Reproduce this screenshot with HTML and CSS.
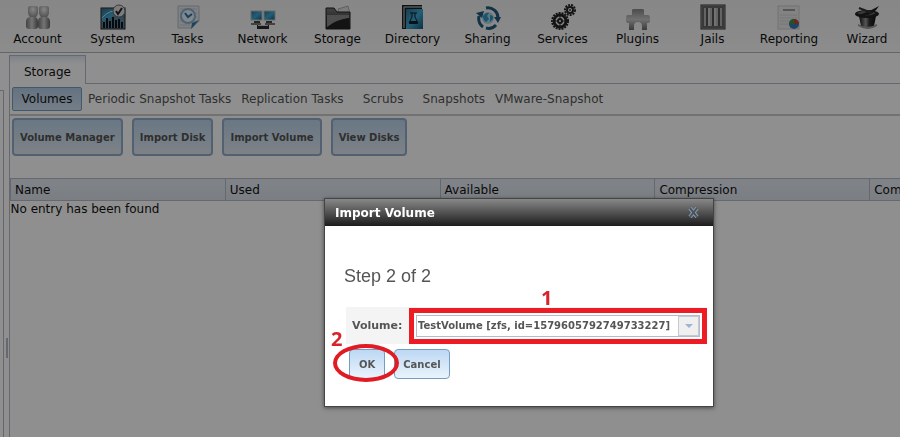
FILE: index.html
```html
<!DOCTYPE html>
<html lang="en">
<head>
    <meta charset="UTF-8">
    <meta name="viewport" content="width=device-width, initial-scale=1.0">
    <title>Storage - Import Volume</title>
    <link rel="stylesheet" href="styles.css">
</head>
<body>
    <svg width="0" height="0" class="defs" aria-hidden="true">
        <defs>
            <linearGradient id="silver" x1="0" y1="0" x2="0" y2="1">
                <stop offset="0" stop-color="#888"/>
                <stop offset="0.5" stop-color="#c8c8c8"/>
                <stop offset="1" stop-color="#6a6a6a"/>
            </linearGradient>
            <radialGradient id="head" cx="0.5" cy="0.3" r="0.7">
                <stop offset="0" stop-color="#f0f0f0"/>
                <stop offset="1" stop-color="#8a8a8a"/>
            </radialGradient>
            <linearGradient id="bust" x1="0" y1="0" x2="1" y2="0">
                <stop offset="0" stop-color="#777"/>
                <stop offset="0.5" stop-color="#d0d0d0"/>
                <stop offset="1" stop-color="#666"/>
            </linearGradient>
            <linearGradient id="dark" x1="0" y1="0" x2="0" y2="1">
                <stop offset="0" stop-color="#777"/>
                <stop offset="1" stop-color="#222"/>
            </linearGradient>
            <linearGradient id="blue" x1="0" y1="0" x2="1" y2="1">
                <stop offset="0" stop-color="#2a6f92"/>
                <stop offset="0.5" stop-color="#3fa9d4"/>
                <stop offset="1" stop-color="#145878"/>
            </linearGradient>
            <linearGradient id="hat" x1="0" y1="0" x2="1" y2="0">
                <stop offset="0" stop-color="#111"/>
                <stop offset="0.4" stop-color="#999"/>
                <stop offset="0.6" stop-color="#333"/>
                <stop offset="1" stop-color="#111"/>
            </linearGradient>
        </defs>
    </svg>

    <nav class="main-menu">
        <a href="#">
            <svg viewBox="0 0 26 26">
                <path d="M3 4q0-2 3-2h4q3 0 3 2v5q-1 5-5 5t-5-5z" fill="url(#head)"/>
                <path d="M14 4q0-2 3-2h4q3 0 3 2v5q-1 5-5 5t-5-5z" fill="url(#head)"/>
                <path d="M1 18q0-5 5-5h3q4 0 4 5v4q0 3-3 3h-6q-3 0-3-3z" fill="url(#bust)"/>
                <path d="M13 18q0-5 4-5h3q5 0 5 5v4q0 3-3 3h-6q-3 0-3-3z" fill="url(#bust)"/>
            </svg>
            <span>Account</span>
        </a>
        <a href="#">
            <svg viewBox="0 0 26 26">
                <rect x="1" y="4" width="24" height="21" fill="#5b8296" stroke="#222"/>
                <path d="M2 5h22v9q-6-8-10-3t-12 6z" fill="url(#blue)"/>
                <path d="M2 14q8-10 20-6" fill="none" stroke="#c8dce4"/>
                <path d="M4 24v-6M7 24v-10M10 24v-7M13 24v-11M16 24v-8M19 24v-9M22 24v-6" stroke="#0c151b" stroke-width="2"/>
                <circle cx="19" cy="7" r="6" fill="#ddd" stroke="#666"/>
                <path d="M16 7l2 3 4-6" fill="none" stroke="#222" stroke-width="2"/>
            </svg>
            <span>System</span>
        </a>
        <a href="#">
            <svg viewBox="0 0 26 26">
                <path d="M3 2h21v15l-7 7h-14z" fill="#e2e6eb" stroke="#b5bcc4"/>
                <path d="M5 5h17M5 9h17M5 13h17M5 17h13M5 21h10" stroke="#c5ccd4"/>
                <circle cx="13" cy="12" r="7" fill="#e8f1f8" stroke="#8fb0ca" stroke-width="2"/>
                <path d="M10 9l3 4 4-3" fill="none" stroke="#2770aa" stroke-width="2"/>
                <path d="M24 16l-8 9 1-6z" fill="#2d79a9"/>
            </svg>
            <span>Tasks</span>
        </a>
        <a href="#">
            <svg viewBox="0 0 26 26">
                <rect x="1" y="7" width="11" height="9" fill="url(#blue)" stroke="#bbb"/>
                <rect x="14" y="7" width="11" height="9" fill="url(#blue)" stroke="#bbb"/>
                <path d="M4 17h6v2h-6zM16 17h6v2h-6z" fill="#444"/>
                <path d="M1 19h10v2h-10zM15 19h10v2h-10z" fill="#777"/>
                <path d="M7 21h12v4h-12z" fill="#2a2a2a"/>
                <path d="M8 21h10v1h-10z" fill="#ccc"/>
            </svg>
            <span>Network</span>
        </a>
        <a href="#">
            <svg viewBox="0 0 26 26">
                <path d="M13 5l10-3 2 8h-11z" fill="#ddd" stroke="#aaa"/>
                <path d="M1 4h8l3 4h13v17h-24z" fill="url(#dark)" stroke="#222"/>
                <path d="M2 11h22v3q-12 1-22 9z" fill="#8b8b8b"/>
                <path d="M2 24q8-8 22-10v10z" fill="#222"/>
            </svg>
            <span>Storage</span>
        </a>
        <a href="#">
            <svg viewBox="0 0 26 26">
                <path d="M2 1h20v24h-20z" fill="#171f25"/>
                <path d="M3 2l2 2v20h-2z" fill="#777"/>
                <path d="M6 5h17v20h-17z" fill="url(#blue)"/>
                <path d="M4 3h18" stroke="#d8d8d8"/>
                <path d="M10 9h7M12 9v4l-3 6h9l-3-6v-4" fill="none" stroke="#10202a"/>
                <path d="M10 17h7l1 3h-9z" fill="#10202a"/>
            </svg>
            <span>Directory</span>
        </a>
        <a href="#">
            <svg viewBox="0 0 26 26">
                <circle cx="13" cy="14" r="6" fill="#a8d4e8"/>
                <path d="M8 12q3-4 6-3l-2 3 2 3-3 3q-3-2-3-6zM15 11l3 1v3l-3 3z" fill="#2f96c4"/>
                <g fill="none" stroke="#225a7c" stroke-width="3">
                    <path d="M8 23a11 11 0 0 1-4-11M11 4a10 10 0 0 1 12 10M21 21a10 10 0 0 1-10 3"/>
                </g>
                <path d="M1 9l8-2-2 7zM19 13h7l-3 6z" fill="#225a7c"/>
            </svg>
            <span>Sharing</span>
        </a>
        <a href="#">
            <svg viewBox="0 0 26 26">
                <g fill="none" stroke="#252525">
                    <circle cx="10" cy="17" r="8" stroke-width="2" stroke-dasharray="2 1"/>
                    <circle cx="10" cy="17" r="6" stroke-width="3"/>
                    <circle cx="10" cy="17" r="2" stroke-width="2"/>
                    <path d="M10 11v4M10 19v4M4 17h4M12 17h4"/>
                    <circle cx="20" cy="6" r="5" stroke-width="2" stroke-dasharray="2 1"/>
                    <circle cx="20" cy="6" r="3" stroke-width="2"/>
                </g>
                <circle cx="20" cy="6" r="1" fill="#333"/>
            </svg>
            <span>Services</span>
        </a>
        <a href="#">
            <svg viewBox="0 0 26 26">
                <path d="M7 6q0-1 2-1h8q2 0 2 1v5h4q2 0 2 3v3q0 2-2 2h-1v7h-5v-4q0-4-4-4t-4 4v4h-5v-7h-1q-2 0-2-2v-3q0-3 2-3h4z" fill="url(#silver)"/>
            </svg>
            <span>Plugins</span>
        </a>
        <a href="#">
            <svg viewBox="0 0 26 26">
                <rect x="1" y="1" width="24" height="24" fill="#b2b2b2" stroke="#333"/>
                <path d="M3 3h20v20h-20z" fill="none" stroke="#666" stroke-width="2"/>
                <path d="M7 4v18M13 4v18M19 4v18" stroke="#555" stroke-width="2"/>
                <path d="M9 4v18M15 4v18" stroke="#ccc" stroke-width="2"/>
            </svg>
            <span>Jails</span>
        </a>
        <a href="#" class="wide">
            <svg viewBox="0 0 26 26">
                <rect x="2" y="2" width="21" height="23" fill="#e9e9e9" stroke="#ccc"/>
                <path d="M7 6h12" stroke="#999" stroke-width="2"/>
                <path d="M4 11h17M4 14h17M4 17h12M4 20h10" stroke="#d4d4d4"/>
                <circle cx="18" cy="20" r="5" fill="#3778b8"/>
                <path d="M18 20v-5a5 5 0 0 0-5 5z" fill="#3b9448"/>
                <path d="M18 20v-5a5 5 0 0 1 5 5z" fill="#bd4a38"/>
            </svg>
            <span>Reporting</span>
        </a>
        <a href="#" class="wide">
            <svg viewBox="0 0 26 26">
                <path d="M5 12h17l-2 10q-6 5-13 0z" fill="url(#hat)"/>
                <ellipse cx="13" cy="10" rx="12" ry="4" fill="#222"/>
                <path d="M3 9q9-5 19 0-9 5-19 0z" fill="#666"/>
                <path d="M1 11q8 0 24-9-5 9-16 10z" fill="#222"/>
                <path d="M5 4l13 5" stroke="#333" stroke-width="2"/>
                <path d="M4 20q9 6 19 0v2q-9 6-19 0z" fill="#999"/>
            </svg>
            <span>Wizard</span>
        </a>
    </nav>

    <div class="layout">
        <aside class="tree"></aside>
        <div class="splitter"><i></i></div>
        <main class="pane">
            <div class="tabs">
                <button class="tab">Storage</button>
            </div>
            <div class="subtabs">
                <button class="active">Volumes</button>
                <button>Periodic Snapshot Tasks</button>
                <button>Replication Tasks</button>
                <button>Scrubs</button>
                <button>Snapshots</button>
                <button>VMware-Snapshot</button>
            </div>
            <div class="toolbar">
                <button class="btn">Volume Manager</button>
                <button class="btn">Import Disk</button>
                <button class="btn">Import Volume</button>
                <button class="btn">View Disks</button>
            </div>
            <table class="grid">
                <thead>
                    <tr>
                        <th>Name</th>
                        <th>Used</th>
                        <th>Available</th>
                        <th>Compression</th>
                        <th>Compression Ratio</th>
                    </tr>
                </thead>
                <tbody>
                    <tr><td colspan="5">No entry has been found</td></tr>
                </tbody>
            </table>
        </main>
    </div>

    <div class="underlay"></div>

    <div class="dialog" role="dialog" aria-labelledby="dialogTitle">
        <div class="dialog-title">
            <span id="dialogTitle">Import Volume</span>
            <button class="close" aria-label="Close">
                <svg viewBox="0 0 11 11">
                    <path d="M2 1l7 9M9 1l-7 9" stroke="#8796a2" stroke-width="4"/>
                    <path d="M2 1l7 9M9 1l-7 9" stroke="#46535e" stroke-width="2"/>
                </svg>
            </button>
        </div>
        <form class="dialog-body">
            <h2>Step 2 of 2</h2>
            <div class="field">
                <label for="volume">Volume:</label>
                <div class="highlight">
                    <span class="mark one">1</span>
                    <div class="combo">
                        <select id="volume">
                            <option>TestVolume [zfs, id=1579605792749733227]</option>
                        </select>
                        <span class="arrow"></span>
                    </div>
                </div>
            </div>
            <div class="actions">
                <div class="ok">
                    <button type="button" class="btn">OK</button>
                    <span class="circle"></span>
                    <span class="mark two">2</span>
                </div>
                <button type="button" class="btn">Cancel</button>
            </div>
        </form>
    </div>
</body>
</html>
```
FILE: styles.css
```css
* {
    box-sizing: border-box;
}

body {
    margin: 0;
    min-height: 100vh;
    display: flex;
    flex-direction: column;
    overflow: hidden;
    background: #fff;
    color: #111;
    font-family: Verdana, "DejaVu Sans", sans-serif;
    font-size: 12px;
    line-height: 16px;
}

button, select {
    font-family: inherit;
    margin: 0;
}

.defs {
    position: absolute;
}

/* top menu */
.main-menu {
    display: flex;
    height: 53px;
    overflow: hidden;
    background: linear-gradient(#f0f0f0, #fafafa);
    border-bottom: 1px solid #b0b4bc;
}

.main-menu a {
    flex: 0 0 75px;
    display: flex;
    flex-direction: column;
    align-items: center;
    padding-top: 4px;
    color: #111;
    text-decoration: none;
}

.main-menu a.wide {
    flex-basis: 78px;
}

.main-menu svg {
    width: 26px;
    height: 26px;
    margin-bottom: 1px;
}

/* page layout */
.layout {
    flex: 1;
    display: flex;
    padding-top: 2px;
}

.tree {
    width: 4px;
    margin-top: 35px;
    border: 1px solid #b5bcc7;
    border-width: 1px 1px 0 0;
}

.splitter {
    width: 5px;
    display: flex;
    align-items: center;
    justify-content: center;
    padding-top: 204px;
}

.splitter i {
    width: 2px;
    height: 20px;
    background: #b5bcc7;
}

.pane {
    flex: 1;
    min-width: 0;
    overflow: hidden;
    border-left: 1px solid #b5bcc7;
}

.tabs {
    display: flex;
    border-bottom: 1px solid #b5bcc7;
}

.tab {
    height: 29px;
    margin-bottom: -1px;
    padding: 4px 14px 0;
    border: 1px solid #b5bcc7;
    border-width: 1px 1px 0 0;
    background: linear-gradient(#dfe8f7, #fff 8px);
    color: #111;
    font-size: 12px;
}

.subtabs {
    display: flex;
    padding: 3px 2px;
    border-bottom: 2px solid #ccc;
}

.subtabs button {
    min-width: 69px;
    height: 24px;
    padding: 0 5px;
    border: 0;
    background: none;
    color: #555;
    font-size: 12px;
    line-height: 22px;
}

.subtabs .active {
    min-width: 70px;
    margin-right: 1px;
    border: 1px solid #769dc0;
    border-radius: 2px;
    background: linear-gradient(#b4cce6, #cfe0f2);
    color: #111;
}

.btn {
    padding: 0 8px;
    height: 30px;
    border: 1px solid #769dc0;
    border-radius: 4px;
    background: linear-gradient(#bcd8f4, #eaf3fc);
    color: #555;
    font-size: 10px;
    font-weight: bold;
}

.toolbar {
    display: flex;
    gap: 9px;
    padding: 2px 2px 22px;
}

.toolbar .btn {
    padding: 0 6px;
    height: 38px;
    border: 2px solid #92aecb;
    background: linear-gradient(#bcd4ec, #e0e8f0);
}

.grid {
    width: 1075px;
    table-layout: fixed;
    border-collapse: collapse;
}

.grid th {
    height: 22px;
    padding: 0 4px;
    border: 1px solid #b5bcc7;
    background: linear-gradient(#e4eaf1, #dbe1ea);
    font-weight: normal;
    text-align: left;
}

.grid td {
    padding: 0;
}

/* modal */
.underlay {
    position: fixed;
    inset: 0;
    background: rgba(0, 0, 0, 0.44);
}

.dialog {
    position: absolute;
    left: 36%;
    top: 198px;
    width: 390px;
    border: 1px solid #444;
    background: #fff;
    box-shadow: 0 1px 4px rgba(0, 0, 0, 0.5);
}

.dialog-title {
    display: flex;
    align-items: center;
    justify-content: space-between;
    height: 27px;
    padding: 0 14px 0 10px;
    background: linear-gradient(#888, #1c1c1c);
    color: #fff;
    font-weight: bold;
}

.close {
    display: flex;
    padding: 0;
    border: 0;
    background: none;
}

.close svg {
    width: 11px;
    height: 11px;
}

.dialog-body {
    padding: 38px 6px 27px 19px;
    color: #555;
}

.dialog-body h2 {
    margin: 0 0 19px;
    font: 18px/24px "Liberation Sans", Arial, sans-serif;
}

.field {
    display: flex;
    align-items: center;
    height: 37px;
    margin-left: 2px;
    background: #f4f4f4;
}

.field label {
    flex: 1;
    padding-left: 6px;
    font-size: 11px;
    font-weight: bold;
}

.highlight {
    position: relative;
    width: 298px;
    height: 36px;
    padding: 2px;
    border: 5px solid #ed1c24;
    background: #fff;
}

.combo {
    display: flex;
    height: 22px;
    border: 1px solid #b5bcc7;
}

.combo select {
    flex: 1;
    min-width: 0;
    padding: 0 1px;
    border: 0;
    appearance: none;
    background: #fff;
    color: #555;
    font-size: 10px;
    font-weight: bold;
}

.arrow {
    display: flex;
    align-items: center;
    justify-content: center;
    width: 21px;
    border: 1px solid #c4cad3;
    background: #efefef;
}

.arrow::before {
    content: "";
    border: 4px solid transparent;
    border-top-color: #9fb3d4;
    border-bottom: 0;
}

.actions {
    display: flex;
    gap: 9px;
    padding: 5px 5px 0;
}

.ok {
    position: relative;
}

.ok .btn {
    padding: 0 9px;
}

/* annotations */
.circle {
    position: absolute;
    left: -16px;
    top: -5px;
    width: 66px;
    height: 38px;
    border: 4px solid #e01b24;
    border-radius: 50%;
}

.mark {
    position: absolute;
    color: #d8232a;
    font: bold 20px/20px "Open Sans", sans-serif;
}

.one {
    left: 127px;
    top: -25px;
}

.two {
    left: -18px;
    top: -20px;
}
```
